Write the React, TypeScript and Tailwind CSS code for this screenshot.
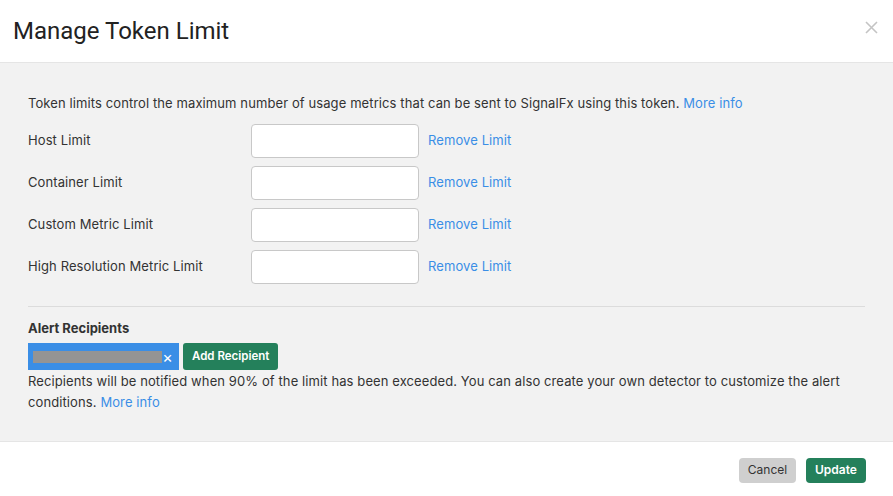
import React from 'react';

const limits = ['Host Limit', 'Container Limit', 'Custom Metric Limit', 'High Resolution Metric Limit'];

const App: React.FC = () => {
  return (
    <div className="w-[893px] h-[496px] bg-white flex flex-col text-[#333] font-['Inter',sans-serif]">
      {/* header */}
      <div className="h-[63px] shrink-0 flex items-center justify-between pl-[13px] pr-[15px] border-b border-[#e5e5e5]">
        <h1 className="text-[24px] font-['Roboto',sans-serif] text-[#222]">Manage Token Limit</h1>
        <svg width="13" height="13" viewBox="0 0 13 13" className="mb-[8px]">
          <path d="M1 1L12 12M12 1L1 12" stroke="#c4c4c4" strokeWidth="1.6" />
        </svg>
      </div>

      {/* body */}
      <div className="flex-1 bg-[#f2f2f2] px-[28px] pt-[32px] text-[13px] tracking-[0.1px] border-b border-[#e5e5e5]">
        <p className="leading-[16px]">
          Token limits control the maximum number of usage metrics that can be sent to SignalFx using this token.{' '}
          <a className="text-[#3a8ee6]">More info</a>
        </p>
        <div className="mt-[12px] flex flex-col gap-[8px]">
          {limits.map((l) => (
            <div key={l} className="flex items-center h-[34px] pt-[1px]">
              <span className="w-[223px]">{l}</span>
              <input className="w-[168px] h-[34px] bg-white border border-[#c8c8c8] rounded-[4px]" />
              <a className="ml-[9px] text-[#3a8ee6]">Remove Limit</a>
            </div>
          ))}
        </div>
        <div className="mt-[23px] border-t border-[#dcdcdc]" />
        <div className="mt-[13px] font-bold leading-[16px] tracking-normal">Alert Recipients</div>
        <div className="mt-[7px] flex items-center gap-[4px]">
          <div className="w-[151px] h-[27px] bg-[#3a8ee6] flex items-center pl-[5px] pr-[6px] justify-between">
            <div className="w-[129px] h-[12px] bg-[#949494]" />
            <span className="text-white text-[16px] leading-none">×</span>
          </div>
          <button className="h-[27px] px-[9px] bg-[#24805b] text-white text-[11.5px] font-semibold rounded-[3px] tracking-normal">
            Add Recipient
          </button>
        </div>
        <p className="mt-[1px] leading-[21px]">
          Recipients will be notified when 90% of the limit has been exceeded. You can also create your own detector to customize the alert conditions.{' '}
          <a className="text-[#3a8ee6]">More info</a>
        </p>
      </div>

      {/* footer */}
      <div className="h-[54px] shrink-0 flex items-center justify-end gap-[10px] pr-[27px] pt-[2px]">
        <button className="h-[25px] w-[57px] bg-[#cfcfcf] text-[#333] text-[12px] rounded-[4px]">Cancel</button>
        <button className="h-[25px] w-[60px] bg-[#24805b] text-white text-[12px] font-semibold rounded-[4px]">Update</button>
      </div>
    </div>
  );
};

export default App;
